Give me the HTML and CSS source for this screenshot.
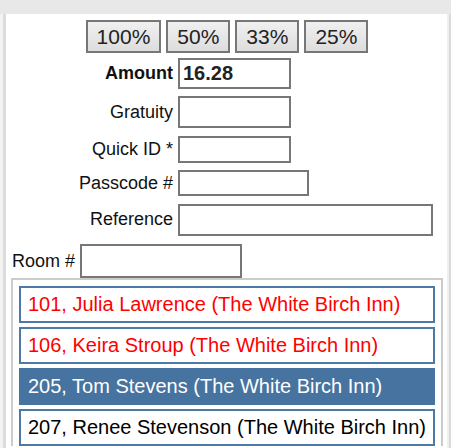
FILE: index.html
```html
<!DOCTYPE html>
<html>
<head>
<meta charset="utf-8">
<link rel="stylesheet" href="styles.css">
</head>
<body>
<div class="topbar"></div>
<div class="frame">
  <div class="panel">
    <div class="buttons">
      <button class="pct">100%</button>
      <button class="pct">50%</button>
      <button class="pct">33%</button>
      <button class="pct">25%</button>
    </div>
    <div class="form">
      <label class="lbl bold">Amount</label>
      <div class="field amount">16.28</div>
      <label class="lbl">Gratuity</label>
      <div class="field gratuity"></div>
      <label class="lbl">Quick ID *</label>
      <div class="field quick"></div>
      <label class="lbl">Passcode #</label>
      <div class="field pass"></div>
      <label class="lbl">Reference</label>
      <div class="field ref"></div>
    </div>
    <div class="room">
      <label class="lbl">Room #</label>
      <div class="field roomin"></div>
    </div>
    <div class="list">
      <div class="item red">101, Julia Lawrence (The White Birch Inn)</div>
      <div class="item red">106, Keira Stroup (The White Birch Inn)</div>
      <div class="item selected">205, Tom Stevens (The White Birch Inn)</div>
      <div class="item">207, Renee Stevenson (The White Birch Inn)</div>
    </div>
  </div>
</div>
</body>
</html>
```
FILE: styles.css
```css
html, body {
  margin: 0;
  padding: 0;
  background: #ffffff;
  font-family: "Liberation Sans", Arial, sans-serif;
  color: #111;
}
.topbar {
  height: 14px;
  background: #e8e8e8;
}
.frame {
  border-left: 3px solid #f3f3f3;
  border-right: 2px solid #dadada;
  height: 434px;
  overflow: hidden;
}
.panel {
  border-left: 3px solid #dcdcdc;
  border-right: 2px solid #efefef;
  background: #fff;
  height: 100%;
  box-sizing: border-box;
  padding-top: 6px;
}
.buttons {
  display: flex;
  justify-content: center;
  gap: 5px;
  padding-left: 1px;
}
.pct {
  font-family: "Liberation Sans", Arial, sans-serif;
  font-size: 21px;
  color: #222;
  height: 33px;
  padding: 0 9px;
  border: 2px solid #777;
  background: linear-gradient(#f0f0f0, #dddddd);
  border-radius: 0;
  line-height: 29px;
}
.form {
  display: grid;
  grid-template-columns: 167px auto;
  column-gap: 5px;
  row-gap: 7px;
  align-items: center;
  margin-top: 5px;
}
.lbl {
  font-size: 18px;
  text-align: right;
  color: #111;
}
.bold {
  font-weight: bold;
}
.field {
  box-sizing: border-box;
  border: 2px solid #777;
  background: #fff;
  width: 113px;
  height: 32px;
}
.amount {
  height: 31px;
  font-size: 20px;
  font-weight: bold;
  color: #222;
  padding-left: 3px;
  line-height: 27px;
}
.gratuity {
  height: 32px;
}
.quick {
  height: 27px;
  margin-top: 1px;
}
.pass {
  width: 131px;
  height: 26px;
}
.ref {
  width: 255px;
  height: 32px;
  margin-top: 1px;
}
.room {
  display: flex;
  align-items: center;
  gap: 5px;
  padding-left: 6px;
  margin-top: 8px;
}
.roomin {
  width: 162px;
  height: 34px;
}
.list {
  margin: 0 4px 0 5px;
  border: 2px solid #cccccc;
  border-bottom: none;
  padding: 6px 6px 0 6px;
  display: flex;
  flex-direction: column;
  gap: 4px;
}
.item {
  box-sizing: border-box;
  height: 37px;
  border: 2px solid #4d79a6;
  padding-left: 7px;
  font-size: 20px;
  line-height: 33px;
  color: #000;
  white-space: nowrap;
}
.red {
  color: #ff0000;
}
.selected {
  background: #46739f;
  border-color: #46739f;
  color: #fff;
}
```
